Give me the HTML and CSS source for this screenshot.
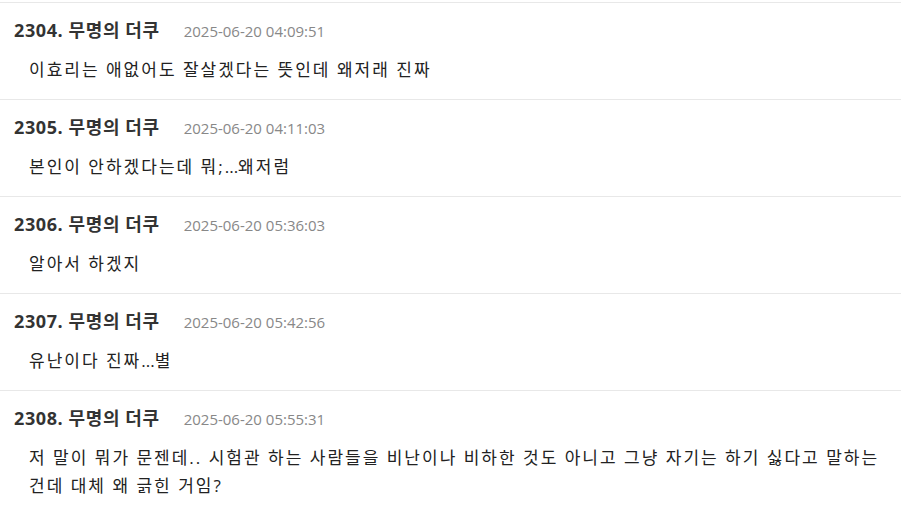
FILE: index.html
```html
<!DOCTYPE html>
<html lang="ko">
<head>
<meta charset="utf-8">
<link rel="stylesheet" href="styles.css">
</head>
<body>
<div class="list">
  <div class="item">
    <div class="head"><span class="name">2304. 무명의 더쿠</span><span class="date">2025-06-20 04:09:51</span></div>
    <div class="body">이효리는 애없어도 잘살겠다는 뜻인데 왜저래 진짜</div>
  </div>
  <div class="item">
    <div class="head"><span class="name">2305. 무명의 더쿠</span><span class="date">2025-06-20 04:11:03</span></div>
    <div class="body">본인이 안하겠다는데 뭐;<span class="dots">...</span>왜저럼</div>
  </div>
  <div class="item">
    <div class="head"><span class="name">2306. 무명의 더쿠</span><span class="date">2025-06-20 05:36:03</span></div>
    <div class="body">알아서 하겠지</div>
  </div>
  <div class="item">
    <div class="head"><span class="name">2307. 무명의 더쿠</span><span class="date">2025-06-20 05:42:56</span></div>
    <div class="body">유난이다 진짜<span class="dots">...</span>별</div>
  </div>
  <div class="item">
    <div class="head"><span class="name">2308. 무명의 더쿠</span><span class="date">2025-06-20 05:55:31</span></div>
    <div class="body">저 말이 뭐가 문젠데.. 시험관 하는 사람들을 비난이나 비하한 것도 아니고 그냥 자기는 하기 싫다고 말하는 건데 대체 왜 긁힌 거임?</div>
  </div>
</div>
</body>
</html>
```
FILE: styles.css
```css
html, body {
  margin: 0;
  padding: 0;
  background: #fff;
}
body {
  font-family: "Open Sans", "Noto Sans CJK KR", sans-serif;
  color: #333;
}
.list {
  padding-top: 2px;
}
.item {
  border-top: 1px solid #e8e8e8;
  padding: 15px 14px 15px 14px;
}
.head {
  display: flex;
  align-items: baseline;
  height: 24px;
  line-height: 24px;
  overflow: visible;
}
.name {
  font-size: 18px;
  font-weight: 700;
  color: #333;
  letter-spacing: 0.6px;
  margin-right: 24px;
}
.date {
  font-size: 15px;
  color: #888;
}
.body {
  margin-top: 14px;
  padding-left: 15px;
  font-size: 17px;
  line-height: 28px;
  letter-spacing: 2px;
  color: #222;
}
.dots {
  letter-spacing: 0;
}
```
